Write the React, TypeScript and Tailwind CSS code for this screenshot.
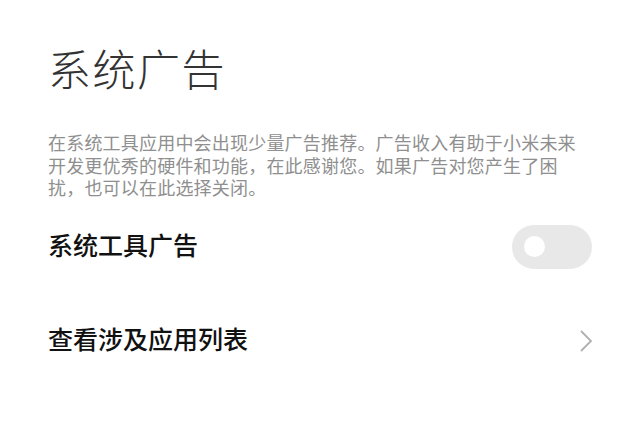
const cjk = { fontFamily: '"Noto Sans CJK SC", "Noto Sans", sans-serif' };

export default function App() {
  return (
    <div
      className="flex h-[444px] w-[640px] flex-col overflow-hidden bg-white px-[48px]"
      style={cjk}
    >
      <h1 className="mt-[46px] text-[43px] font-light leading-none tracking-[1.5px] text-[#333333]">
        系统广告
      </h1>
      <p className="mt-[42px] w-[536px] text-[18px] leading-[22.5px] tracking-[0.2px] text-[#8f8f8f]">
        在系统工具应用中会出现少量广告推荐。广告收入有助于小米未来开发更优秀的硬件和功能，在此感谢您。如果广告对您产生了困扰，也可以在此选择关闭。
      </p>

      <div className="mt-[18px] flex h-[60px] items-center justify-between">
        <span className="mt-[-4px] text-[25px] font-medium text-[#111111]">系统工具广告</span>
        <button
          type="button"
          className="flex h-[44px] w-[80px] items-center rounded-full bg-[#e8e8e8] pl-[12px]"
        >
          <span className="h-[21px] w-[21px] rounded-full bg-white" />
        </button>
      </div>

      <div className="mt-[34px] flex h-[60px] items-center justify-between">
        <span className="mt-[-4px] text-[25px] font-medium text-[#111111]">查看涉及应用列表</span>
        <svg width="14" height="24" viewBox="0 0 14 24" fill="none" className="mr-[-1px]">
          <path d="M2 2 L12 12 L2 22" stroke="#b0b0b0" strokeWidth="1.8" />
        </svg>
      </div>
    </div>
  );
}
